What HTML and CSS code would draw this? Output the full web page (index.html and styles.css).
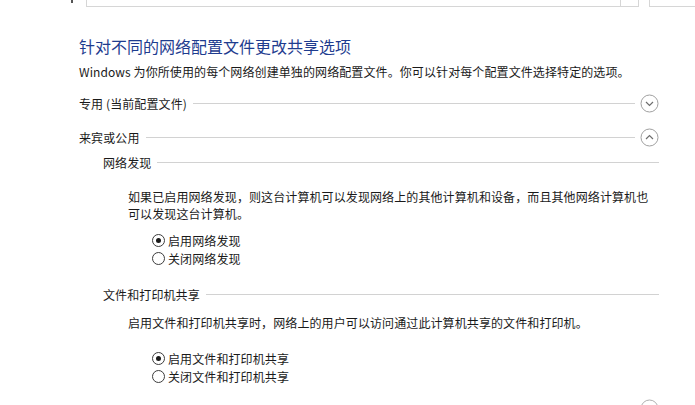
FILE: index.html
```html
<!DOCTYPE html>
<html lang="zh-CN">
<head>
  <meta charset="utf-8" />
  <title>高级共享设置</title>
  <link rel="stylesheet" href="styles.css">
</head>
<body>
  <div class="toolbar">
    <span class="nav-mark"></span>
    <div class="address"></div>
    <div class="drop"></div>
    <div class="search"></div>
  </div>

  <main class="content">
    <h1 class="title">针对不同的网络配置文件更改共享选项</h1>
    <p class="intro">Windows 为你所使用的每个网络创建单独的网络配置文件。你可以针对每个配置文件选择特定的选项。</p>

    <div class="profile collapsed">
      <span>专用 (当前配置文件)</span>
      <span class="rule"></span>
      <svg class="toggle" width="19" height="19" viewBox="0 0 19 19"><circle cx="9.5" cy="9.5" r="8.5" fill="none" stroke="#a0a0a0"/><path d="M6 8l3.5 3.5L13 8" fill="none" stroke="#6e6e6e" stroke-width="1.2"/></svg>
    </div>

    <div class="profile open">
      <span>来宾或公用</span>
      <span class="rule"></span>
      <svg class="toggle" width="19" height="19" viewBox="0 0 19 19"><circle cx="9.5" cy="9.5" r="8.5" fill="none" stroke="#a0a0a0"/><path d="M6 11l3.5-3.5L13 11" fill="none" stroke="#6e6e6e" stroke-width="1.2"/></svg>
    </div>

    <section class="group first">
      <div class="group-head">
        <span>网络发现</span>
        <span class="rule"></span>
      </div>
      <p class="note">如果已启用网络发现，则这台计算机可以发现网络上的其他计算机和设备，而且其他网络计算机也可以发现这台计算机。</p>
      <div class="options">
        <label class="option"><span class="radio on"></span>启用网络发现</label>
        <label class="option"><span class="radio"></span>关闭网络发现</label>
      </div>
    </section>

    <section class="group second">
      <div class="group-head">
        <span>文件和打印机共享</span>
        <span class="rule"></span>
      </div>
      <p class="note">启用文件和打印机共享时，网络上的用户可以访问通过此计算机共享的文件和打印机。</p>
      <div class="options">
        <label class="option"><span class="radio on"></span>启用文件和打印机共享</label>
        <label class="option"><span class="radio"></span>关闭文件和打印机共享</label>
      </div>
    </section>

    <div class="profile last">
      <svg class="toggle" width="19" height="19" viewBox="0 0 19 19"><circle cx="9.5" cy="9.5" r="8.5" fill="none" stroke="#b0b0b0"/></svg>
    </div>
  </main>
</body>
</html>
```

FILE: styles.css
```css
body {
  margin: 0;
  background: #fff;
  color: #1a1a1a;
  font-family: "Noto Sans CJK SC", "Microsoft YaHei", sans-serif;
  font-size: 12px;
  letter-spacing: 0.1px;
  overflow: hidden;
}

.toolbar {
  display: flex;
  height: 7px;
  align-items: flex-start;
}

.nav-mark {
  width: 2px;
  height: 3px;
  margin-left: 71px;
  background: #555;
}

.address {
  margin-left: 13px;
  width: 533px;
  height: 6px;
  border: 1px solid #d6d6d6;
  border-top: none;
}

.drop {
  width: 17px;
  height: 6px;
  border-bottom: 1px solid #d6d6d6;
  border-right: 1px solid #d6d6d6;
}

.search {
  flex: 1;
  margin-left: 10px;
  height: 6px;
  border: 1px solid #d6d6d6;
  border-top: none;
  border-right: none;
}

.content {
  width: 580px;
  padding-left: 79px;
}

.title {
  margin: 28px 0 0;
  font-size: 16px;
  font-weight: normal;
  line-height: 22px;
  letter-spacing: 0;
  color: #1e3c8f;
}

.intro {
  margin: 6px 0 0;
  line-height: 18px;
}

.profile {
  display: flex;
  align-items: center;
  gap: 6px;
  height: 19px;
  line-height: 19px;
}

.profile.collapsed { margin-top: 13px; }
.profile.open { margin-top: 15px; }
.profile.last {
  margin-top: 14px;
  justify-content: flex-end;
}

.profile .toggle {
  margin-left: -1px;
  flex: none;
}

.rule {
  flex: 1;
  height: 0;
  border-top: 1px solid #d2d2d2;
}

.group {
  padding-left: 24px;
}

.group.first { margin-top: 7px; }
.group.second { margin-top: 19px; }

.group-head {
  display: flex;
  align-items: center;
  gap: 6px;
  line-height: 17px;
}

.note {
  margin: 0;
  padding-left: 25px;
  width: 524px;
  line-height: 17px;
}

.group.first .note { margin-top: 17px; }
.group.second .note { margin-top: 11px; }

.options {
  padding-left: 49px;
}

.group.first .options { margin-top: 9px; }
.group.second .options { margin-top: 18px; }

.option {
  display: flex;
  align-items: center;
  gap: 3px;
  height: 18px;
}

.radio {
  position: relative;
  width: 11px;
  height: 11px;
  border: 1px solid #3c3c3c;
  border-radius: 50%;
  background: #fff;
}

.radio.on::after {
  content: "";
  position: absolute;
  left: 3px;
  top: 3px;
  width: 5px;
  height: 5px;
  border-radius: 50%;
  background: #1a1a1a;
}
```
